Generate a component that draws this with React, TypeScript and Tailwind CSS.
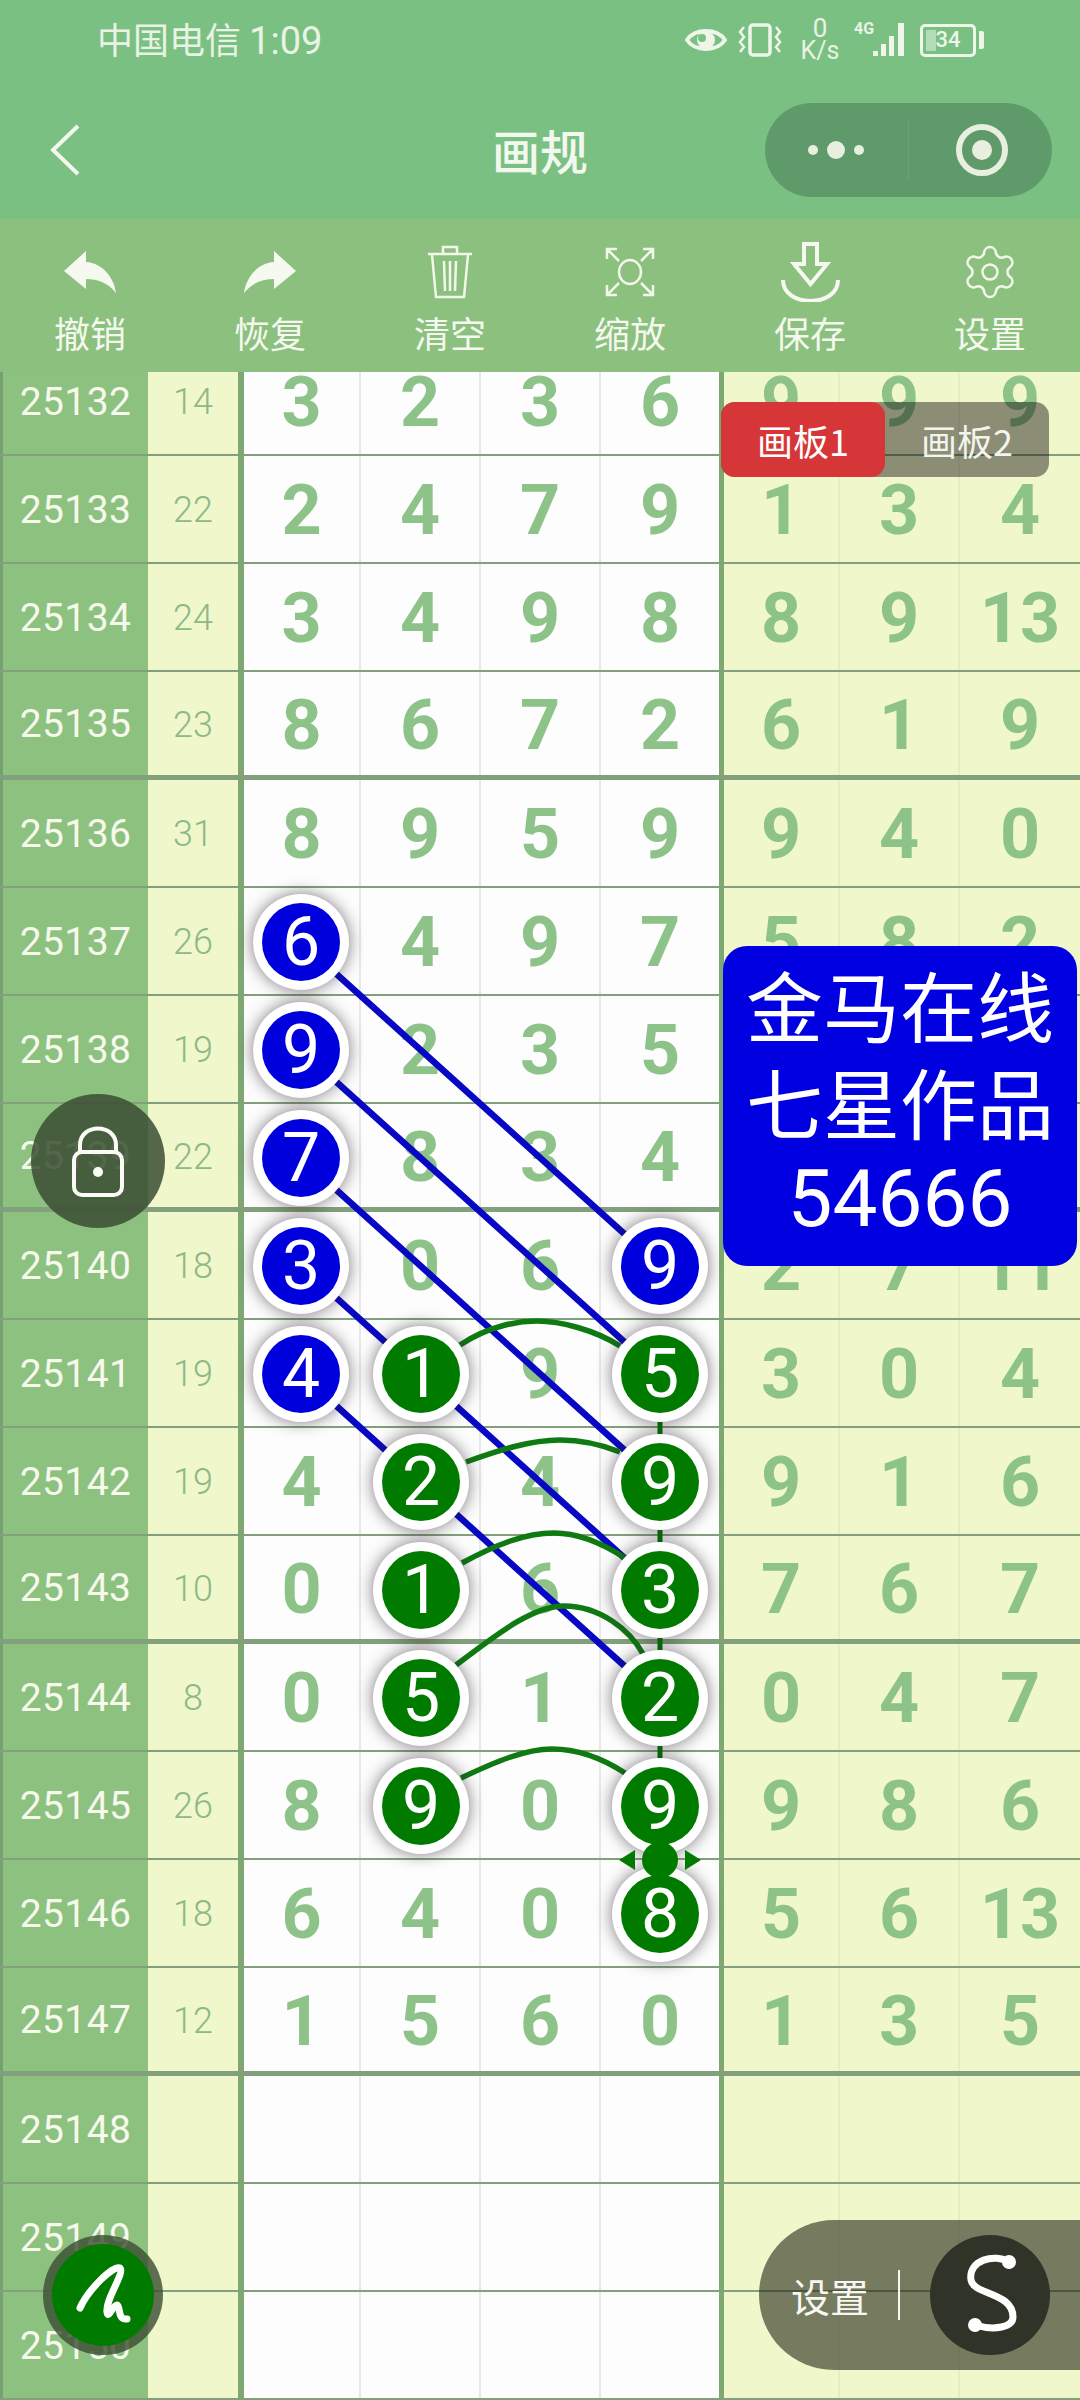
import { Settings } from 'lucide-react';

const cjk = "font-['Noto_Sans_CJK_SC',sans-serif]";
const num = "font-['Roboto',sans-serif]";

const rows: [string, string, string[]][] = [
  ['25132', '14', ['3', '2', '3', '6', '9', '9', '9']],
  ['25133', '22', ['2', '4', '7', '9', '1', '3', '4']],
  ['25134', '24', ['3', '4', '9', '8', '8', '9', '13']],
  ['25135', '23', ['8', '6', '7', '2', '6', '1', '9']],
  ['25136', '31', ['8', '9', '5', '9', '9', '4', '0']],
  ['25137', '26', ['6', '4', '9', '7', '5', '8', '2']],
  ['25138', '19', ['9', '2', '3', '5', '', '', '']],
  ['25139', '22', ['7', '8', '3', '4', '', '', '']],
  ['25140', '18', ['3', '0', '6', '9', '2', '7', '11']],
  ['25141', '19', ['4', '1', '9', '5', '3', '0', '4']],
  ['25142', '19', ['4', '2', '4', '9', '9', '1', '6']],
  ['25143', '10', ['0', '1', '6', '3', '7', '6', '7']],
  ['25144', '8', ['0', '5', '1', '2', '0', '4', '7']],
  ['25145', '26', ['8', '9', '0', '9', '9', '8', '6']],
  ['25146', '18', ['6', '4', '0', '8', '5', '6', '13']],
  ['25147', '12', ['1', '5', '6', '0', '1', '3', '5']],
  ['25148', '', []],
  ['25149', '', []],
  ['25150', '', []],
];

// row centre in page pixels
const rowY = (i: number) => 402 + 108 * i;
const colX = [301, 421, 541, 660];
const tableTop = 372;

const nodes: { c: number; r: number; n: string; blue?: boolean }[] = [
  { c: 0, r: 5, n: '6', blue: true },
  { c: 0, r: 6, n: '9', blue: true },
  { c: 0, r: 7, n: '7', blue: true },
  { c: 0, r: 8, n: '3', blue: true },
  { c: 0, r: 9, n: '4', blue: true },
  { c: 3, r: 8, n: '9', blue: true },
  { c: 1, r: 9, n: '1' },
  { c: 1, r: 10, n: '2' },
  { c: 1, r: 11, n: '1' },
  { c: 1, r: 12, n: '5' },
  { c: 1, r: 13, n: '9' },
  { c: 3, r: 9, n: '5' },
  { c: 3, r: 10, n: '9' },
  { c: 3, r: 11, n: '3' },
  { c: 3, r: 12, n: '2' },
  { c: 3, r: 13, n: '9' },
  { c: 3, r: 14, n: '8' },
];

const arcs = [
  'M460 1345 C490 1325 520 1321 537 1321 C560 1321 595 1330 620 1346',
  'M466 1462 C500 1450 530 1440 560 1440 C585 1440 605 1446 620 1452',
  'M462 1563 C495 1545 525 1533 554 1533 C580 1533 605 1545 625 1558',
  'M456 1665 C490 1640 530 1606 564 1606 C600 1606 630 1630 643 1654',
  'M461 1778 C495 1762 525 1749 552 1749 C580 1749 605 1760 625 1773',
];

function Row({ r, i }: { r: (typeof rows)[number]; i: number }) {
  const thick = (i + 1) % 4 === 0;
  const line = thick ? 'border-b-[5px]' : 'border-b-2';
  const digit = `flex items-center justify-center pt-[2px] ${num} font-bold text-[70px] leading-none text-[#8dc388]`;
  const d = r[2];
  return (
    <div
      className={`grid h-[108px] grid-cols-[148px_90px_6px_117px_120px_120px_118px_5px_116px_120px_120px] ${line} border-[#83a07c] ${
        i === 0 ? 'mt-[-24px]' : ''
      }`}
    >
      <div className={`flex items-center justify-center border-l-[3px] border-[#76a06e] bg-[#8dc17f] pt-[2px] ${num} text-[39px] tracking-[0.4px] text-[#f6f9ec]`}>
        {r[0]}
      </div>
      <div className={`flex items-center justify-center bg-[#f0f7cb] pt-[2px] ${num} font-light text-[36px] text-[#8fb888]`}>
        {r[1]}
      </div>
      <div className="bg-[#7da873]" />
      {[0, 1, 2, 3].map((c) => (
        <div key={c} className={`${digit} bg-[#fdfdfd] ${c < 3 ? 'border-r-2 border-[#e8e8e8]' : ''}`}>
          {d[c]}
        </div>
      ))}
      <div className="bg-[#7da873]" />
      {[4, 5, 6].map((c) => (
        <div key={c} className={`${digit} bg-[#f0f7cb] ${c < 6 ? 'border-r-2 border-[#e6edc4]' : ''}`}>
          {d[c]}
        </div>
      ))}
    </div>
  );
}

function Node({ c, r, n, blue }: { c: number; r: number; n: string; blue?: boolean }) {
  return (
    <div
      className="absolute flex h-[96px] w-[96px] items-center justify-center rounded-full bg-white shadow-[0_0_16px_rgba(40,30,40,0.6)]"
      style={{ left: colX[c] - 48, top: rowY(r) - tableTop - 48 }}
    >
      <div
        className={`flex h-[78px] w-[78px] items-center justify-center rounded-full ${num} text-[68px] leading-none text-white ${
          blue ? 'bg-[#0000dc]' : 'bg-[#007b00]'
        }`}
      >
        {n}
      </div>
    </div>
  );
}

function Tool({ label, children }: { label: string; children: React.ReactNode }) {
  return (
    <div className="flex flex-col items-center">
      <div className="flex h-[66px] items-center justify-center">{children}</div>
      <div className={`mt-[5px] ${cjk} text-[36px] leading-[44px] text-[#f4f8ee]`}>{label}</div>
    </div>
  );
}

export default function App() {
  return (
    <div className="relative flex h-[2400px] w-[1080px] flex-col overflow-hidden bg-[#7da873]">
      {/* Status bar + title */}
      <div className="h-[219px] shrink-0 bg-[#7bc083]">
        <div className="flex h-[80px] items-center justify-between pl-[97px] pr-[96px]">
          <div className={`${cjk} text-[36px] leading-none text-[#e9f3e3]`}>
            中国电信 <span className={`${num} text-[38px]`}>1:09</span>
          </div>
          <div className="flex items-center">
            <svg width="42" height="30" viewBox="0 0 42 30" className="mr-[11px]">
              <path d="M2 15 C10 3 32 3 40 15 C32 27 10 27 2 15 Z" fill="none" stroke="#eef6ea" strokeWidth="4" />
              <circle cx="21" cy="15" r="9" fill="#eef6ea" />
              <circle cx="17" cy="13" r="4" fill="#7bc083" />
            </svg>
            <svg width="44" height="34" viewBox="0 0 44 34" className="mr-[18px]">
              <rect x="12" y="2" width="20" height="30" rx="3" fill="none" stroke="#eef6ea" strokeWidth="3.5" />
              <path d="M6 4 L2 9 L6 14 L2 19 L6 24 L2 29 M38 4 L42 9 L38 14 L42 19 L38 24 L42 29" fill="none" stroke="#eef6ea" strokeWidth="2.5" />
            </svg>
            <div className={`mr-[14px] flex w-[40px] flex-col items-center ${num} text-[#e9f3e3]`}>
              <span className="text-[26px] leading-[22px]">0</span>
              <span className="text-[25px] leading-[24px]">K/s</span>
            </div>
            <div className="relative mr-[12px] h-[36px] w-[54px]">
              <span className={`absolute left-0 top-[-2px] ${num} text-[16px] font-bold leading-[18px] text-[#e9f3e3]`}>4G</span>
              <svg width="54" height="36" viewBox="0 0 54 36" className="absolute left-0 top-0">
                <rect x="19" y="29" width="5" height="5" fill="#eef6ea" />
                <rect x="27" y="22" width="5" height="12" fill="#eef6ea" />
                <rect x="35" y="14" width="5" height="20" fill="#eef6ea" />
                <rect x="44" y="1" width="6" height="33" fill="#eef6ea" />
              </svg>
            </div>
            <div className="relative flex h-[33px] w-[56px] items-center justify-center rounded-[5px] border-[3px] border-[#eef6ea]">
              <div className="absolute bottom-[3px] left-[3px] top-[3px] w-[10px] bg-[#eef6ea]/50" />
              <span className={`relative ${num} text-[22px] font-medium leading-none text-[#eef6ea]`}>34</span>
            </div>
            <div className="ml-[3px] h-[18px] w-[5px] rounded-r-[2px] bg-[#eef6ea]" />
          </div>
        </div>
        <div className="relative mt-[23px] flex h-[94px] items-center justify-center">
          <svg width="30" height="52" viewBox="0 0 30 52" className="absolute left-[50px]">
            <path d="M28 2 L3 26 L28 50" fill="none" stroke="#f2f8ee" strokeWidth="4" />
          </svg>
          <div className={`${cjk} mt-[-2px] text-[48px] font-medium leading-none text-[#f2f8ee]`}>画规</div>
          <div className="absolute left-[765px] flex h-[94px] w-[287px] items-center rounded-full bg-[#5f9a6a]">
            <div className="flex h-[60px] w-[144px] items-center justify-end gap-[9px] border-r border-[#6aa574] pr-[44px]">
              <div className="h-[10px] w-[10px] rounded-full bg-[#e8efdf]" />
              <div className="h-[18px] w-[18px] rounded-full bg-[#e8efdf]" />
              <div className="h-[10px] w-[10px] rounded-full bg-[#e8efdf]" />
            </div>
            <div className="ml-[47px] flex h-[52px] w-[52px] items-center justify-center rounded-full border-[6px] border-[#e8efdf]">
              <div className="h-[20px] w-[20px] rounded-full bg-[#e8efdf]" />
            </div>
          </div>
        </div>
      </div>

      {/* Toolbar */}
      <div className="grid h-[153px] shrink-0 grid-cols-6 bg-[#8bc07f] pt-[20px]">
        <Tool label="撤销">
          <svg width="52" height="42" viewBox="0 0 52 42">
            <path d="M22 0 L0 20 L22 38 V28 C34 28 44 32 52 42 C50 26 38 12 22 11 Z" fill="#f6f9f0" />
          </svg>
        </Tool>
        <Tool label="恢复">
          <svg width="52" height="42" viewBox="0 0 52 42">
            <path d="M30 0 L52 20 L30 38 V28 C18 28 8 32 0 42 C2 26 14 12 30 11 Z" fill="#f6f9f0" />
          </svg>
        </Tool>
        <Tool label="清空">
          <svg width="44" height="54" viewBox="0 0 44 54" fill="none" stroke="#f2f7ea" strokeWidth="2.5">
            <path d="M0 9 H44 M15 9 V2 H29 V9 M4 10 L8 52 H36 L40 10 M16 16 L17 46 M22 16 V46 M28 16 L27 46" />
          </svg>
        </Tool>
        <Tool label="缩放">
          <svg width="50" height="50" viewBox="0 0 50 50" fill="none" stroke="#f2f7ea" strokeWidth="2.5">
            <ellipse cx="25" cy="25" rx="11" ry="12" />
            <path d="M2 12 V2 H12 M2 2 L14 14 M38 2 H48 V12 M48 2 L36 14 M2 38 V48 H12 M2 48 L14 36 M48 38 V48 H38 M48 48 L36 36" />
          </svg>
        </Tool>
        <Tool label="保存">
          <svg width="61" height="60" viewBox="0 0 61 60" fill="none" stroke="#f6f9f0" strokeWidth="4">
            <path d="M24 2 H37 V22 H47 L30.5 42 L14 22 H24 Z" />
            <path d="M3 38 C3 66 58 66 58 38" />
          </svg>
        </Tool>
        <Tool label="设置">
          <Settings size={60} strokeWidth={1} color="#f2f7ea" />
        </Tool>
      </div>

      {/* Table */}
      <div className="relative flex-1 overflow-hidden">
        {rows.map((r, i) => (
          <Row key={r[0]} r={r} i={i} />
        ))}

        <svg className="absolute left-0 top-0" width="1080" height="2028" viewBox="0 372 1080 2028" fill="none">
          <path d={`M660 ${rowY(9)} V${rowY(14)}`} stroke="#007b00" strokeWidth="5" />
          {[5, 6, 7, 8, 9].map((r) => (
            <path key={r} d={`M301 ${rowY(r)} L660 ${rowY(r + 3)}`} stroke="#0707c4" strokeWidth="6.5" />
          ))}
          {arcs.map((d) => (
            <path key={d} d={d} stroke="#0f7a12" strokeWidth="5.5" />
          ))}
        </svg>

        {nodes.map((n) => (
          <Node key={`${n.c}-${n.r}`} {...n} />
        ))}

        {/* Drag handle */}
        <svg className="absolute left-[616px] top-[1468px]" width="88" height="40" viewBox="0 0 88 40">
          <path d="M3 20 L19 10 V30 Z M85 20 L69 10 V30 Z" fill="#007b00" />
          <circle cx="44" cy="20" r="18" fill="#007b00" />
        </svg>

        {/* Board tabs */}
        <div className="absolute left-[721px] top-[30px] flex h-[75px] w-[328px] rounded-[14px] bg-[#0f0b0d]/45">
          <div className={`flex w-[164px] items-center justify-center rounded-[14px] bg-[#d63638] ${cjk} text-[36px] text-white`}>
            画板1
          </div>
          <div className={`flex w-[164px] items-center justify-center ${cjk} text-[36px] text-[#f4f4ee]`}>画板2</div>
        </div>

        {/* Promo box */}
        <div className="absolute left-[723px] top-[574px] flex h-[320px] w-[354px] flex-col items-center rounded-[24px] bg-[#0000e0] pt-[11px] text-white">
          <div className={`${cjk} text-[77px] leading-[93px]`}>金马在线</div>
          <div className={`${cjk} mt-[4px] text-[77px] leading-[93px]`}>七星作品</div>
          <div className={`${num} mt-[6px] text-[80px] leading-[93px]`}>54666</div>
        </div>
      </div>

      {/* Lock button */}
      <div className="absolute left-[31px] top-[1094px] flex h-[134px] w-[134px] items-center justify-center rounded-full bg-[#3a4c32]/85">
        <svg width="54" height="72" viewBox="0 0 54 72" fill="none" stroke="#fbfbf6" strokeWidth="4">
          <path d="M9 28 V20 C9 -2 45 -2 45 20 V28" />
          <rect x="3" y="27" width="48" height="43" rx="8" />
          <circle cx="27" cy="47" r="5" fill="#fbfbf6" stroke="none" />
        </svg>
      </div>

      {/* Pen button */}
      <div className="absolute left-[43px] top-[2235px] flex h-[120px] w-[120px] items-center justify-center rounded-full bg-[#3a4c32]/80">
        <div className="flex h-[102px] w-[102px] items-center justify-center rounded-full bg-[#007b00]">
          <svg width="70" height="70" viewBox="-35 -35 70 70" fill="none" stroke="#fff" strokeWidth="7" strokeLinecap="round" strokeLinejoin="round">
            <path d="M-23 13 C-15 -5 10 -30 17 -27 C22 -22 2 5 4 17 C5 25 10 10 14 10 C18 12 14 25 24 24" />
          </svg>
        </div>
      </div>

      {/* Settings pill */}
      <div className="absolute left-[759px] top-[2220px] flex h-[150px] w-[321px] items-center rounded-l-[75px] bg-[#252616]/60 pl-[32px]">
        <span className={`${cjk} text-[39px] leading-none text-[#f8f8f2]`}>设置</span>
        <div className="ml-[29px] h-[50px] w-[2px] bg-[#f8f8f2]" />
        <div className="ml-[30px] flex h-[120px] w-[120px] items-center justify-center rounded-full bg-[#2f3328]">
          <svg width="120" height="120" viewBox="-60 -60 120 120" fill="none" stroke="#fff" strokeWidth="7" strokeLinecap="round">
            <path d="M19 -33 C5 -42 -22 -35 -19 -15 C-17 0 23 -3 23 22 C23 32 5 36 -15 30" />
            <circle cx="19" cy="-33" r="7" fill="#fff" stroke="none" />
            <circle cx="-15" cy="30" r="7" fill="#fff" stroke="none" />
          </svg>
        </div>
      </div>
    </div>
  );
}
